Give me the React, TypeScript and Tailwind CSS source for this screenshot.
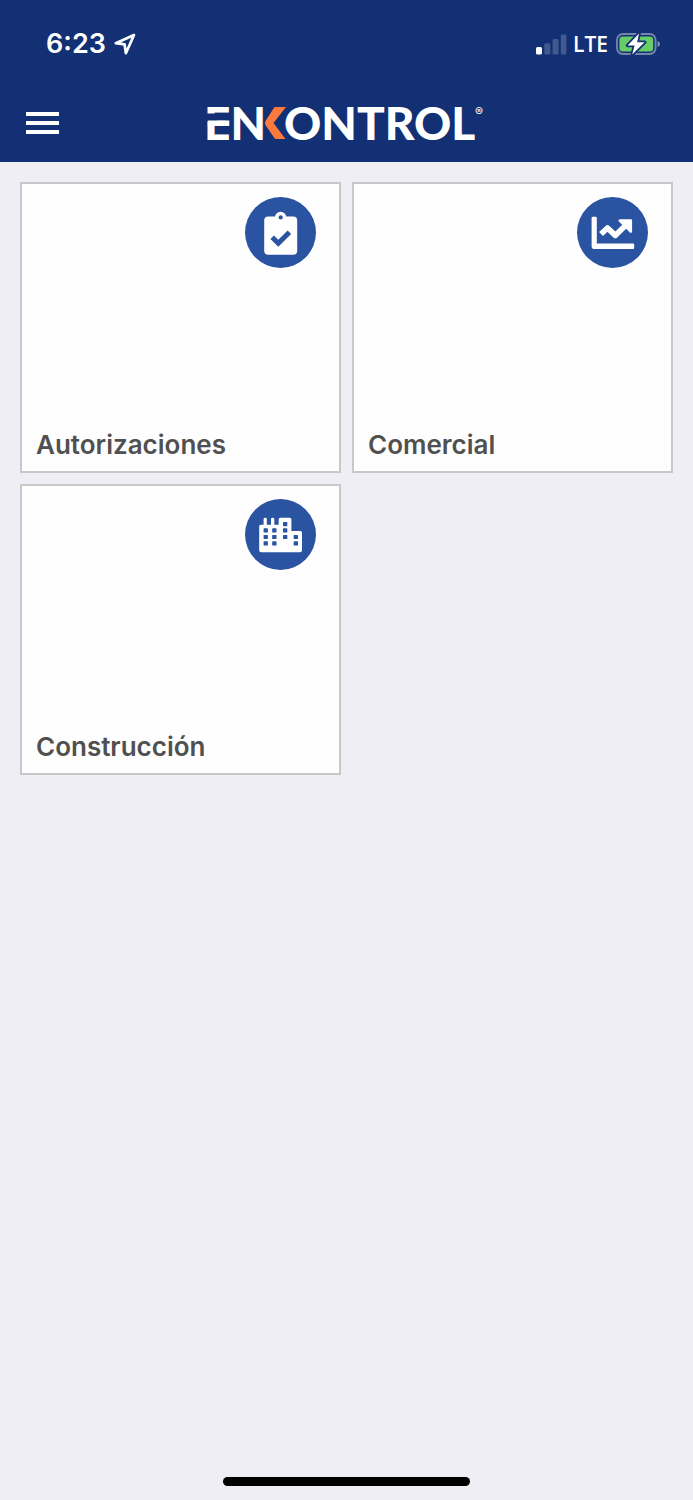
import type { ReactNode } from 'react';

function LocationArrow() {
  return (
    <svg className="h-[22px] w-[22px]" viewBox="0 0 22 22" fill="none" stroke="white" strokeWidth="2.7" strokeLinejoin="round" aria-hidden="true">
      <path d="M20 2 L1.8 10.2 L10.6 11.4 L11.9 20.2 Z" />
    </svg>
  );
}

function SignalBars() {
  return (
    <svg className="h-[21px] w-[31px]" viewBox="0 0 31 21" fill="white" aria-hidden="true">
      <rect x="0" y="13" width="6" height="7.5" rx="1.6" />
      <rect x="8.3" y="9.3" width="6" height="11.2" rx="1.6" opacity="0.2" />
      <rect x="16.6" y="5" width="6" height="15.5" rx="1.6" opacity="0.2" />
      <rect x="24.8" y="0.4" width="5.6" height="20.1" rx="1.6" opacity="0.2" />
    </svg>
  );
}

function Battery() {
  return (
    <svg className="h-[24px] w-[45px]" viewBox="0 0 45 24" aria-hidden="true">
      <rect x="1" y="2" width="38.6" height="20" rx="6" fill="none" stroke="white" strokeOpacity="0.42" strokeWidth="1.8" />
      <path d="M41.6 9 C44.6 10.2 44.6 13.8 41.6 15 Z" fill="white" fillOpacity="0.5" />
      <rect x="3.4" y="4.4" width="33.8" height="15.2" rx="3.6" fill="#67ce67" />
      <path d="M23 1.4 L11.6 13.4 L18.6 13.4 L16.2 22.6 L28.6 10.2 L21.2 10.2 Z" fill="white" stroke="#123073" strokeWidth="3.6" strokeLinejoin="round" paintOrder="stroke" />
    </svg>
  );
}

function Logo() {
  return (
    <svg className="h-[60px] w-[288px]" viewBox="-4 -8 288 60" role="img" aria-label="ENKONTROL">
      <g fill="white" fontFamily="Lato, sans-serif" fontWeight="900">
        <text x="-3" y="38.5" fontSize="46">EN</text>
        <text x="77" y="38.5" fontSize="46">ONTROL</text>
        <text x="268" y="15" fontSize="12" fontWeight="400" fontFamily="Inter, sans-serif">®</text>
      </g>
      <rect x="0" y="12.5" width="10" height="8" fill="#123073" />
      <rect x="0.8" y="19.5" width="21.5" height="5.5" fill="white" />
      <path d="M67.5 6 H79 L66.5 22 L78.5 38 H69.5 Q68 38 67 36.5 L58.5 24 Q57.3 22 58.5 20 Z" fill="#ff7a3c" />
    </svg>
  );
}

function ClipboardIcon() {
  return (
    <svg className="size-[71px]" viewBox="0 0 71 71" aria-hidden="true">
      <circle cx="35.6" cy="20.6" r="5.8" fill="white" />
      <rect x="19.2" y="19.5" width="33" height="38.2" rx="4" fill="white" />
      <circle cx="35.7" cy="20.4" r="2.1" fill="#2a53a2" />
      <path d="M27.2 40.2 L33.3 46.2 L44.4 35.2" fill="none" stroke="#2a53a2" strokeWidth="5" />
    </svg>
  );
}

function ChartIcon() {
  return (
    <svg className="size-[71px]" viewBox="0 0 71 71" fill="none" stroke="white" aria-hidden="true">
      <path d="M14.6 21 Q14.6 19.8 15.8 19.8 H18.6 Q19.8 19.8 19.8 21 V46.6 H56 Q57.2 46.6 57.2 47.8 V50.8 Q57.2 52 56 52 H17.4 Q14.6 52 14.6 49.2 Z" fill="white" stroke="none" />
      <path d="M24 37 L30.5 31 L38.3 38.4 L49.5 27.6" strokeWidth="5.6" strokeLinejoin="round" />
      <path d="M42.8 23.6 H53.8 V34.6 Z" fill="white" strokeWidth="2.6" strokeLinejoin="round" />
    </svg>
  );
}

const windows = [
  [18.6, 29.3], [18.6, 35.9], [18.6, 42.3],
  [27.2, 29.3], [27.2, 35.9], [27.2, 42.3],
  [38, 23], [38, 29.3], [38, 35.9],
  [48.7, 35.9], [48.7, 42.3],
];

function BuildingIcon() {
  return (
    <svg className="size-[71px]" viewBox="0 0 71 71" aria-hidden="true">
      <path d="M14.2 27.2 Q14.2 25.7 15.7 25.7 H18.6 V20 Q18.6 18.7 20.2 18.7 Q21.8 18.7 21.8 20 V25.7 H26 V20 Q26 18.7 27.6 18.7 Q29.3 18.7 29.3 20 V25.7 H33.7 V20.2 Q33.7 18.7 35.2 18.7 H44.9 Q46.4 18.7 46.4 20.2 V32 H55.5 Q57 32 57 33.5 V51.3 Q57 53.3 55 53.3 H16.2 Q14.2 53.3 14.2 51.3 Z" fill="white" />
      {windows.map(([x, y]) => (
        <rect key={`${x}-${y}`} x={x} y={y} width="4.3" height="4.2" rx="0.6" fill="#2a53a2" />
      ))}
    </svg>
  );
}

function Tile({ label, icon }: { label: string; icon: ReactNode }) {
  return (
    <a href="#" className="flex h-[291px] flex-col justify-between border-2 border-[#c8c8cb] bg-[#fefefe] px-3.5 pt-[13px] pb-2.5">
      <span className="mr-[9px] self-end rounded-full bg-[#2a53a2]">{icon}</span>
      <span className="text-[26px] leading-8 font-semibold text-[#505050]">{label}</span>
    </a>
  );
}

export default function App() {
  return (
    <div className="flex min-h-screen flex-col bg-[#efeef4] font-['Inter',sans-serif]">
      <header className="bg-[#123073] text-white">
        <div className="flex h-[88px] items-center justify-between pr-8 pl-[46px]">
          <div className="flex items-center gap-2">
            <span className="text-[27px] leading-8 font-semibold">6:23</span>
            <LocationArrow />
          </div>
          <div className="flex items-center gap-2">
            <div className="flex items-center gap-1.5">
              <SignalBars />
              <span className="font-['Open_Sans',sans-serif] text-[21px] leading-6 font-semibold">LTE</span>
            </div>
            <Battery />
          </div>
        </div>
        <div className="grid h-[74px] grid-cols-[1fr_auto_1fr] items-center px-[26px] pb-1">
          <button type="button" aria-label="Menu" className="flex w-[33px] flex-col gap-[5px]">
            <span className="h-1 w-full bg-white" />
            <span className="h-1 w-full bg-white" />
            <span className="h-1 w-full bg-white" />
          </button>
          <Logo />
        </div>
      </header>
      <main className="grid grid-cols-2 gap-[11px] px-5 pt-5">
        <Tile label="Autorizaciones" icon={<ClipboardIcon />} />
        <Tile label="Comercial" icon={<ChartIcon />} />
        <Tile label="Construcción" icon={<BuildingIcon />} />
      </main>
      <div className="mt-auto mb-3.5 h-[9px] w-[247px] self-center rounded-full bg-black" />
    </div>
  );
}
